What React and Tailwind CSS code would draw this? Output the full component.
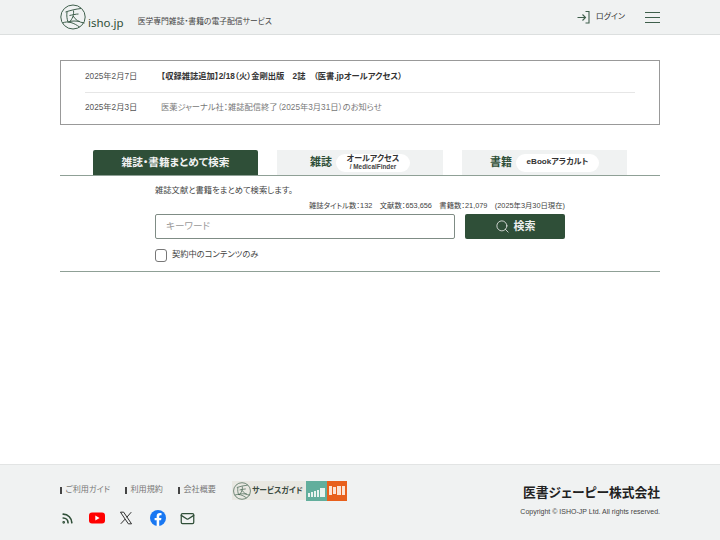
import React from 'react';
import { Rss, Mail, Search } from 'lucide-react';

function Logo({ size = 26, color = '#3f5f4c' }) {
  return (
    <svg width={size} height={size} viewBox="0 0 26 26" fill="none" stroke={color} strokeWidth="1">
      <ellipse cx="13" cy="13" rx="12.2" ry="12" />
      <path d="M5.5 8 C10 6.5 16 5 21 4.5 M7 8 C6.5 12 7 15 8 18 C12 16.5 16 17 20 17.5 M9.5 11.5 C12 11 16 10 18.5 10 M13.5 6.5 C14 11 12.5 15 9 18.5 M13.2 12 C15 15.5 19 18.5 24.5 19 M2.5 19 C8 16.5 14 19 19.5 23" />
    </svg>
  );
}

function XIcon() {
  return (
    <svg width="14" height="14" viewBox="0 0 24 24" fill="none" stroke="#222" strokeWidth="1.6">
      <path d="M2.5 2 H8 L21.5 22 H16 Z M21 2 L13.3 10.8 M10.6 13.8 L3 22" />
    </svg>
  );
}

function FacebookIcon() {
  return (
    <svg width="16" height="16" viewBox="0 0 24 24">
      <circle cx="12" cy="12" r="12" fill="#1877f2" />
      <path fill="#fff" d="M16.6 15.5 17.2 12H13.8V9.7c0-1 .5-1.9 2-1.9h1.5v-3s-1.4-.2-2.7-.2c-2.8 0-4.6 1.7-4.6 4.7V12H6.9v3.5H10V24h3.8v-8.5z" />
    </svg>
  );
}

function LoginIcon() {
  return (
    <svg width="13" height="14" viewBox="0 0 13 14" fill="none" stroke="#3f5f4c" strokeWidth="1.1">
      <path d="M0.5 7.5 H8.5 M5.5 4.5 L8.5 7.5 L5.5 10.5 M8.5 1.5 H12 V13 H8.5" />
    </svg>
  );
}

function Header() {
  return (
    <header className="h-[35px] bg-[#f0f2f2] border-b border-[#dcdfdf] flex items-center justify-between px-[60px]">
      <div className="flex items-center">
        <div className="flex items-end pb-[1px]">
          <Logo />
          <span className="text-[11.5px] leading-[14px] text-[#2f4f38] ml-[2px] font-['Noto_Sans',sans-serif]">isho.jp</span>
        </div>
        <span className="ml-[14px] mt-[9px] text-[7.8px] leading-[12px] text-[#444]">医学専門雑誌・書籍の電子配信サービス</span>
      </div>
      <div className="flex items-center">
        <LoginIcon />
        <span className="ml-[6px] text-[8px] text-[#333]">ログイン</span>
        <div className="ml-[20px] w-[15px] flex flex-col gap-[4px]">
          <div className="h-px bg-[#3f5f4c]" />
          <div className="h-px bg-[#3f5f4c]" />
          <div className="h-px bg-[#3f5f4c]" />
        </div>
      </div>
    </header>
  );
}

function Notices() {
  return (
    <div className="mx-[60px] mt-[25px] h-[65px] border border-[#999] px-[24px] text-[8.25px]">
      <div className="h-[32px] flex items-center border-b border-[#e6e6e6] pt-[1px]">
        <span className="w-[76px] text-[#555]">2025年2月7日</span>
        <span className="font-bold text-[#333]">【収録雑誌追加】2/18（火）金剛出版　2誌　（医書.jpオールアクセス）</span>
      </div>
      <div className="h-[31px] flex items-center">
        <span className="w-[76px] text-[#555]">2025年2月3日</span>
        <span className="text-[#777]">医薬ジャーナル社：雑誌配信終了（2025年3月31日）のお知らせ</span>
      </div>
    </div>
  );
}

function Tabs() {
  return (
    <div className="mx-[60px] mt-[25px] h-[26px] border-b border-[#8fa096] pl-[33px] flex gap-[19px]">
      <div className="w-[165px] h-[25px] bg-[#2f4f38] rounded-t-[2px] flex items-center justify-center text-[10.7px] font-bold text-[#f2f2f2]">
        雑誌・書籍まとめて検索
      </div>
      <div className="w-[166px] h-[25px] bg-[#f0f2f2] flex items-center justify-center gap-[4px]">
        <span className="text-[11px] font-bold text-[#2f4f38]">雑誌</span>
        <div className="w-[74px] h-[18px] bg-white rounded-full flex flex-col items-center justify-center">
          <span className="text-[8px] leading-[9px] font-bold text-[#333]">オールアクセス</span>
          <span className="text-[6.4px] leading-[8px] font-bold text-[#444]">/ MedicalFinder</span>
        </div>
      </div>
      <div className="w-[165px] h-[25px] bg-[#f0f2f2] flex items-center justify-center gap-[4px]">
        <span className="text-[11px] font-bold text-[#2f4f38]">書籍</span>
        <div className="w-[83px] h-[18px] bg-white rounded-full flex items-center justify-center text-[8.1px] font-bold text-[#333]">
          eBookアラカルト
        </div>
      </div>
    </div>
  );
}

function SearchBox() {
  return (
    <div className="mx-[60px] h-[96px] border-b border-[#8fa096] px-[95px] pt-[8px]">
      <p className="text-[8.3px] leading-[13px] text-[#444]">雑誌文献と書籍をまとめて検索します。</p>
      <p className="mt-[3px] text-right text-[7.35px] leading-[11px] text-[#444] whitespace-pre">雑誌タイトル数：132　文献数：653,656　書籍数：21,079　(2025年3月30日現在)</p>
      <div className="mt-[3px] flex gap-[10px]">
        <div className="w-[300px] h-[25px] border border-[#7f8c85] rounded-[2px] flex items-center pl-[10px] text-[9.6px] text-[#999]">
          キーワード
        </div>
        <button className="w-[100px] h-[25px] bg-[#2f4f38] rounded-[2px] flex items-center justify-center gap-[4px] text-[11px] font-bold text-[#eee]">
          <Search size={15} strokeWidth={1.3} />
          検索
        </button>
      </div>
      <label className="mt-[10px] flex items-center gap-[5px] text-[8.25px] text-[#444]">
        <span className="w-[12px] h-[13px] border border-[#777] rounded-[3px] bg-white" />
        契約中のコンテンツのみ
      </label>
    </div>
  );
}

function Footer() {
  return (
    <footer className="mt-auto h-[76px] bg-[#f0f2f2] border-t border-[#e2e4e4] flex justify-between px-[60px] pt-[15px]">
      <div>
        <div className="flex items-center h-[21px] text-[8.1px] text-[#777]">
          <a className="w-[65px] flex items-center"><span className="w-[1.5px] h-[7px] bg-[#444] mr-[4px]" />ご利用ガイド</a>
          <a className="w-[53px] flex items-center"><span className="w-[1.5px] h-[7px] bg-[#444] mr-[4px]" />利用規約</a>
          <a className="w-[54px] flex items-center"><span className="w-[1.5px] h-[7px] bg-[#444] mr-[4px]" />会社概要</a>
          <div className="flex items-center">
            <div className="w-[74px] h-[19px] bg-[#e9e8e2] flex items-center pl-[1px] gap-[1px]">
              <Logo size={18} />
              <span className="text-[7.8px] font-bold text-[#3a4a40] whitespace-nowrap">サービスガイド</span>
            </div>
            <div className="w-[21px] h-[20px] bg-[#62ae9c] flex items-end justify-center gap-px pb-[4px]">
              <div className="w-[2px] h-[4px] bg-[#e8f3ef]" />
              <div className="w-[2px] h-[5px] bg-[#e8f3ef]" />
              <div className="w-[2px] h-[6px] bg-[#e8f3ef]" />
              <div className="w-[2px] h-[7px] bg-[#e8f3ef]" />
              <div className="w-[5px] h-[9px] bg-[#e8f3ef]" />
            </div>
            <div className="w-[20px] h-[20px] bg-[#e8601c] flex items-center justify-center gap-[1px]">
              <div className="w-[3px] h-[9px] bg-[#fbe4d5]" />
              <div className="w-[3px] h-[7px] bg-[#fbe4d5]" />
              <div className="w-[4px] h-[9px] bg-[#fbe4d5]" />
              <div className="w-[3px] h-[9px] bg-[#fbe4d5]" />
            </div>
          </div>
        </div>
        <div className="mt-[9px] ml-[1px] flex items-center h-[16px]">
          <Rss size={13} strokeWidth={3} className="text-[#2f4f38]" />
          <div className="ml-[15px] w-[16px] flex justify-center"><svg width="16" height="12" viewBox="0 0 16 12"><rect width="16" height="11" y="0.5" rx="3" fill="#f00" /><path d="M6.3 3.5 L10.6 6 L6.3 8.5Z" fill="#fff" /></svg></div>
          <div className="ml-[14px] w-[14px] flex justify-center"><XIcon /></div>
          <div className="ml-[17px] w-[16px] flex justify-center"><FacebookIcon /></div>
          <div className="ml-[14px] w-[15px] flex justify-center"><Mail size={15} strokeWidth={2} className="text-[#2f4f38]" /></div>
        </div>
      </div>
      <div className="flex flex-col items-end pt-[4px]">
        <div className="text-[12.75px] leading-[18px] font-bold text-[#222]">医書ジェーピー株式会社</div>
        <div className="mt-[5px] text-[7px] leading-[10px] text-[#444]">Copyright © ISHO-JP Ltd. All rights reserved.</div>
      </div>
    </footer>
  );
}

export default function App() {
  return (
    <div className="w-[720px] h-[540px] bg-white flex flex-col overflow-hidden [font-feature-settings:'palt'] font-['Liberation_Sans','Noto_Sans_CJK_JP',sans-serif]">
      <Header />
      <Notices />
      <Tabs />
      <SearchBox />
      <Footer />
    </div>
  );
}
